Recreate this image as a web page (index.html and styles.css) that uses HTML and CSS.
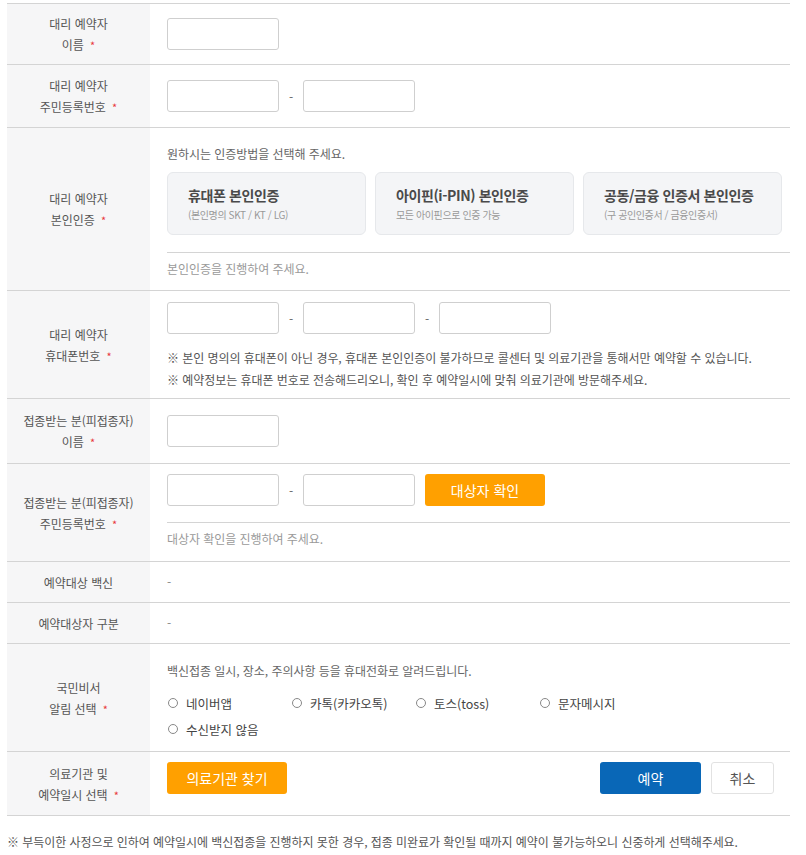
FILE: index.html
```html
<!DOCTYPE html>
<html lang="ko">
<head>
  <meta charset="UTF-8">
  <title>대리 예약</title>
  <link rel="stylesheet" href="styles.css">
</head>
<body>
  <div class="wrap">
    <div class="form">
      <div class="row">
        <div class="label"><span>대리 예약자<br>이름 <em class="req">*</em></span></div>
        <div class="field pad14">
          <input type="text" class="inp">
        </div>
      </div>

      <div class="row">
        <div class="label"><span>대리 예약자<br>주민등록번호 <em class="req">*</em></span></div>
        <div class="field pad15">
          <div class="line">
            <input type="text" class="inp"><span class="dash">-</span><input type="password" class="inp">
          </div>
        </div>
      </div>

      <div class="row">
        <div class="label"><span>대리 예약자<br>본인인증 <em class="req">*</em></span></div>
        <div class="field cert-field">
          <p class="guide">원하시는 인증방법을 선택해 주세요.</p>
          <div class="certs">
            <div class="cert">
              <strong>휴대폰 본인인증</strong>
              <span>(본인명의 SKT / KT / LG)</span>
            </div>
            <div class="cert">
              <strong>아이핀(i-PIN) 본인인증</strong>
              <span>모든 아이핀으로 인증 가능</span>
            </div>
            <div class="cert">
              <strong>공동/금융 인증서 본인인증</strong>
              <span>(구 공인인증서 / 금융인증서)</span>
            </div>
          </div>
          <p class="hint">본인인증을 진행하여 주세요.</p>
        </div>
      </div>

      <div class="row">
        <div class="label"><span>대리 예약자<br>휴대폰번호 <em class="req">*</em></span></div>
        <div class="field phone-field">
          <div class="line">
            <input type="text" class="inp"><span class="dash">-</span><input type="text" class="inp"><span class="dash">-</span><input type="text" class="inp">
          </div>
          <ul class="notes">
            <li>※ 본인 명의의 휴대폰이 아닌 경우, 휴대폰 본인인증이 불가하므로 콜센터 및 의료기관을 통해서만 예약할 수 있습니다.</li>
            <li>※ 예약정보는 휴대폰 번호로 전송해드리오니, 확인 후 예약일시에 맞춰 의료기관에 방문해주세요.</li>
          </ul>
        </div>
      </div>

      <div class="row">
        <div class="label"><span>접종받는 분(피접종자)<br>이름 <em class="req">*</em></span></div>
        <div class="field pad16">
          <input type="text" class="inp">
        </div>
      </div>

      <div class="row">
        <div class="label"><span>접종받는 분(피접종자)<br>주민등록번호 <em class="req">*</em></span></div>
        <div class="field target-field">
          <div class="line">
            <input type="text" class="inp"><span class="dash">-</span><input type="password" class="inp">
            <button class="btn orange check">대상자 확인</button>
          </div>
          <p class="hint">대상자 확인을 진행하여 주세요.</p>
        </div>
      </div>

      <div class="row">
        <div class="label"><span>예약대상 백신</span></div>
        <div class="field plain">-</div>
      </div>

      <div class="row">
        <div class="label"><span>예약대상자 구분</span></div>
        <div class="field plain">-</div>
      </div>

      <div class="row">
        <div class="label"><span>국민비서<br>알림 선택 <em class="req">*</em></span></div>
        <div class="field notice-field">
          <p class="guide">백신접종 일시, 장소, 주의사항 등을 휴대전화로 알려드립니다.</p>
          <div class="radios">
            <label class="radio"><span class="dot"></span>네이버앱</label>
            <label class="radio"><span class="dot"></span>카톡(카카오톡)</label>
            <label class="radio"><span class="dot"></span>토스(toss)</label>
            <label class="radio"><span class="dot"></span>문자메시지</label>
            <label class="radio"><span class="dot"></span>수신받지 않음</label>
          </div>
        </div>
      </div>

      <div class="row last">
        <div class="label"><span>의료기관 및<br>예약일시 선택 <em class="req">*</em></span></div>
        <div class="field action-field">
          <button class="btn orange find">의료기관 찾기</button>
          <div class="actions">
            <button class="btn blue">예약</button>
            <button class="btn white">취소</button>
          </div>
        </div>
      </div>
    </div>

    <p class="foot">※ 부득이한 사정으로 인하여 예약일시에 백신접종을 진행하지 못한 경우, 접종 미완료가 확인될 때까지 예약이 불가능하오니 신중하게 선택해주세요.</p>
  </div>
</body>
</html>
```

FILE: styles.css
```css
body {
  margin: 0;
  background: #fff;
  font-family: "Noto Sans CJK KR", "Noto Sans", sans-serif;
  font-size: 12px;
  color: #555;
  letter-spacing: -0.05px;
}

p, ul {
  margin: 0;
  padding: 0;
}

.wrap {
  padding: 3px 16px 0 7px;
}

.form {
  border-top: 1px solid #d4d4d4;
}

.row {
  display: grid;
  grid-template-columns: 143px 1fr;
  border-bottom: 1px solid #d4d4d4;
}

.label {
  display: flex;
  align-items: center;
  justify-content: center;
  text-align: center;
  padding: 9px 4px;
  background: #f6f6f7;
  line-height: 21px;
  color: #555;
}

.req {
  font-style: normal;
  color: #e8383d;
  font-size: 11px;
  line-height: 1;
  margin-left: 3px;
}

.field {
  padding-left: 17px;
  min-width: 0;
}

.pad14 {
  padding-top: 14px;
  padding-bottom: 14px;
}

.pad15 {
  padding-top: 15px;
  padding-bottom: 15px;
}

.pad16 {
  padding-top: 16px;
  padding-bottom: 16px;
}

.line {
  display: flex;
  align-items: center;
}

.inp {
  width: 112px;
  height: 32px;
  box-sizing: border-box;
  border: 1px solid #cfcfcf;
  border-radius: 3px;
  background: #fff;
  display: block;
}

.dash {
  width: 24px;
  text-align: center;
  color: #666;
}

.guide {
  line-height: 20px;
  color: #666;
}

.hint {
  line-height: 20px;
  color: #9a9a9a;
  border-top: 1px solid #d4d4d4;
}

/* 본인인증 */
.cert-field {
  padding-top: 16px;
  padding-bottom: 11px;
}

.certs {
  display: grid;
  grid-template-columns: repeat(3, 199px);
  gap: 9px;
  margin: 8px 0 17px;
}

.cert {
  height: 63px;
  box-sizing: border-box;
  padding: 10px 20px 0;
  background: #f4f5f7;
  border: 1px solid #e6e8eb;
  border-radius: 6px;
}

.cert strong {
  display: block;
  font-size: 14px;
  font-weight: 700;
  color: #4a4a4a;
  line-height: 24px;
  letter-spacing: -0.4px;
}

.cert span {
  display: block;
  font-size: 10px;
  color: #999;
  line-height: 16px;
  letter-spacing: -0.4px;
}

.cert-field .hint {
  padding-top: 6px;
}

/* 휴대폰 */
.phone-field {
  padding-top: 11px;
  padding-bottom: 7px;
}

.notes {
  list-style: none;
  margin-top: 13px;
  line-height: 22px;
  color: #555;
}

/* 피접종자 */
.target-field {
  padding-top: 10px;
  padding-bottom: 12px;
}

.target-field .hint {
  margin-top: 16px;
  padding-top: 6px;
}

.check {
  margin-left: 10px;
}

.plain {
  display: flex;
  align-items: center;
  padding-top: 10px;
  padding-bottom: 10px;
  line-height: 20px;
  color: #888;
}

/* 알림 */
.notice-field {
  padding-top: 17px;
  padding-bottom: 9px;
}

.radios {
  display: flex;
  flex-wrap: wrap;
  margin-top: 9px;
  width: 500px;
}

.radio {
  display: flex;
  align-items: center;
  width: 124px;
  height: 26px;
  font-size: 12.5px;
  letter-spacing: 0;
  color: #444;
}

.dot {
  width: 8px;
  height: 8px;
  border: 1px solid #888;
  border-radius: 50%;
  margin: 0 8px 0 1px;
}

/* 버튼 */
.btn {
  height: 32px;
  border: none;
  border-radius: 3px;
  font-family: inherit;
  font-size: 14px;
  letter-spacing: 0;
  cursor: pointer;
}

.orange {
  width: 120px;
  background: #ffa000;
  color: #fff;
}

.blue {
  width: 101px;
  background: #0967b7;
  color: #fff;
}

.white {
  width: 63px;
  background: #fff;
  border: 1px solid #e2e2e2;
  color: #555;
}

.last {
  min-height: 63px;
}

.action-field {
  display: flex;
  align-items: flex-start;
  justify-content: space-between;
  padding: 10px 16px 0 17px;
}

.actions {
  display: flex;
  gap: 10px;
}

.foot {
  margin-top: 16px;
  line-height: 20px;
  color: #555;
}
```
